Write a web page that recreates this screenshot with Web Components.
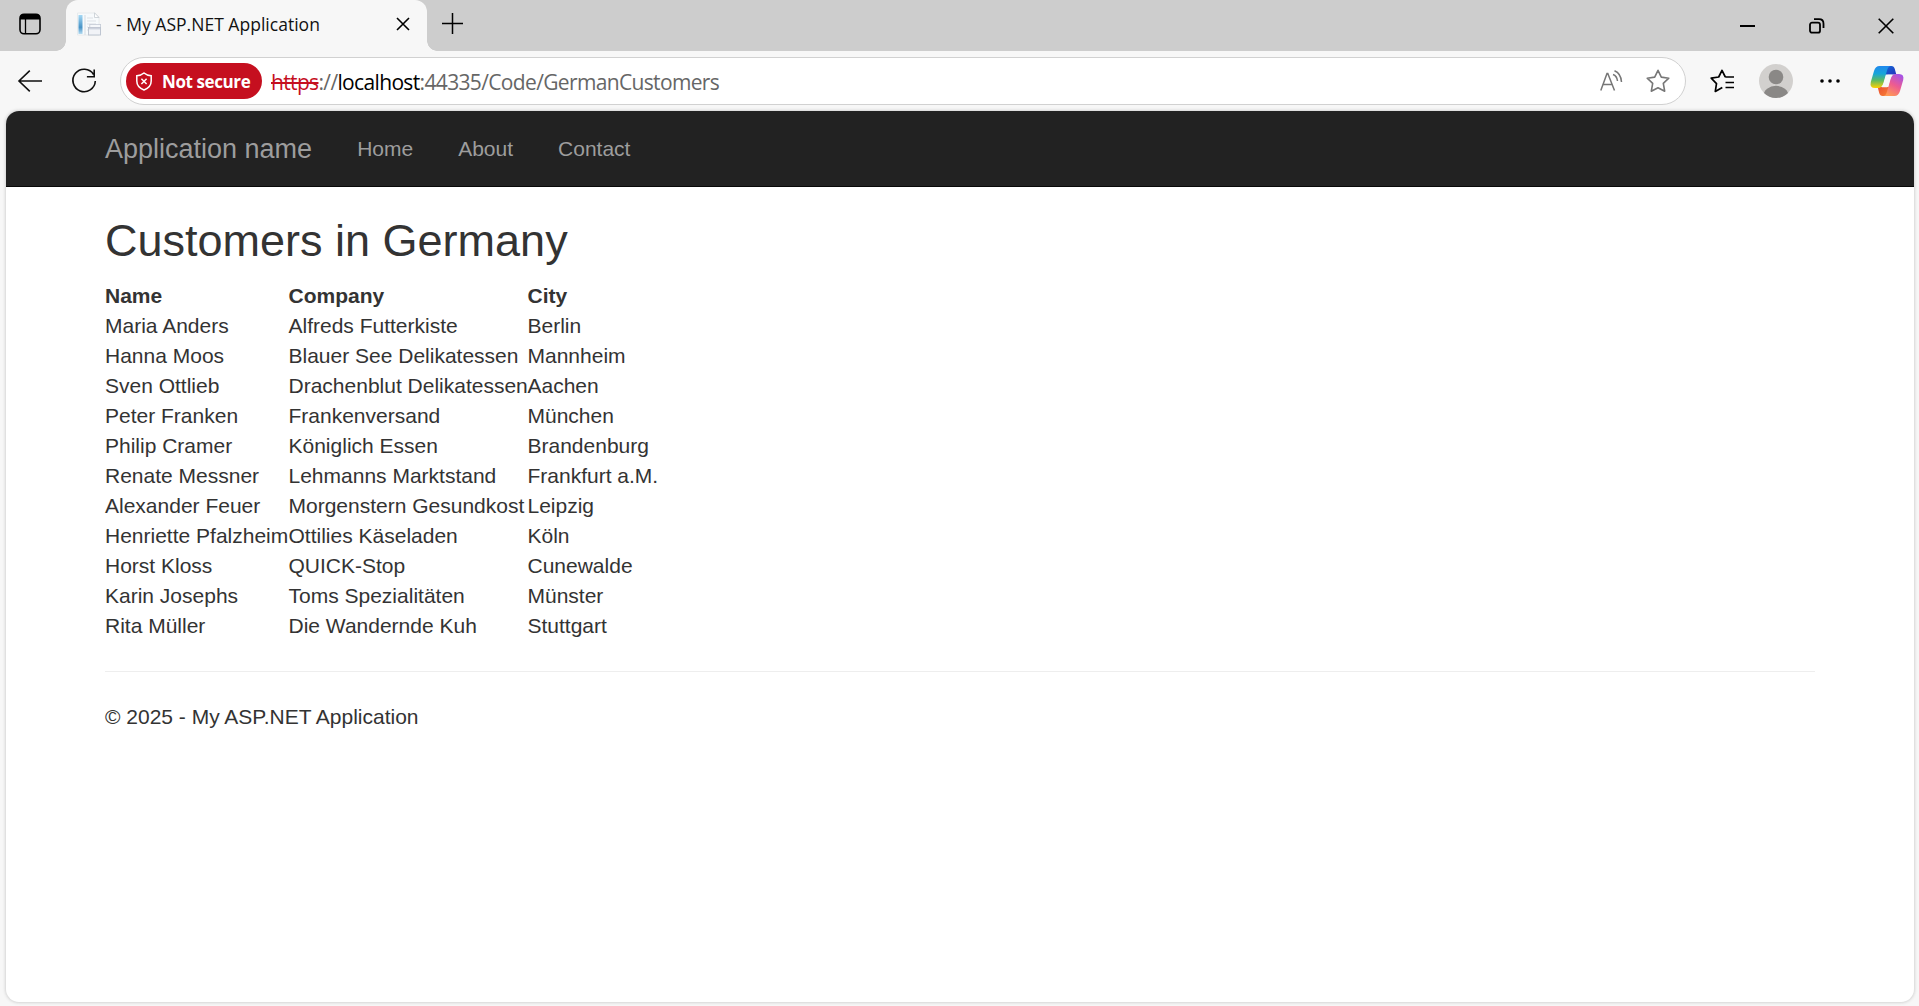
<!DOCTYPE html>
<html lang="en">
<head>
<meta charset="utf-8">
<title>- My ASP.NET Application</title>
<style>
html,body{margin:0;height:100%;background:#f7f7f7;overflow:hidden}
body{font-family:"Liberation Sans",Arial,sans-serif;color:#333}
</style>
</head>
<body>
<browser-window>
  <tab-strip slot="tabs"><browser-tab>- My ASP.NET Application</browser-tab></tab-strip>
  <address-bar slot="toolbar"></address-bar>
  <site-page>
    <site-navbar slot="nav" brand="Application name">
      <nav-link>Home</nav-link><nav-link>About</nav-link><nav-link>Contact</nav-link>
    </site-navbar>
    <h2 slot="title">Customers in Germany</h2>
    <customer-table></customer-table>
    <span slot="footer">© 2025 - My ASP.NET Application</span>
  </site-page>
</browser-window>
<script>
function define(name, html, setup) {
  const template = document.createElement('template');
  template.innerHTML = html;
  customElements.define(name, class extends HTMLElement {
    constructor() {
      super();
      this.attachShadow({ mode: 'open' }).append(template.content.cloneNode(true));
    }
    connectedCallback() { if (setup) setup(this, this.shadowRoot); }
  });
}

const icons = {
  workspace: [22, 22, `<rect x="1" y="1.2" width="20" height="19.6" rx="4" fill="none" stroke="#000" stroke-width="1.6"/><path d="M1 6.500V4.500Q1 1 4.500 1h13Q21 1 21 4.500V6.500z" fill="#000"/><path d="M6.500 6v15" stroke="#000" stroke-width="1.3"/>`],
  favicon: [25, 25, `<defs><linearGradient id="a" x1="0" y1="0" x2="0" y2="1"><stop stop-color="#a5d8f4"/><stop offset=".65" stop-color="#4793c6"/><stop offset="1" stop-color="#b5dcf2"/></linearGradient></defs><path d="M.5 1H18l4 4v18H.5z" fill="#f7fafc" stroke="#e3e7ea" stroke-width=".8"/><path d="M17.500.8v4.700H22z" fill="#fff" stroke="#c5cbd2" stroke-width=".8"/><rect x="1.500" y="3" width="4" height="19" fill="url(#a)"/><path d="M8 3v20" stroke="#d5dbe1"/><path d="M10 6h6M10 9h9M10 12h9M10 15h1M10 18h1" stroke="#dde1e6" stroke-width="1"/><rect x="12.800" y="12.500" width="10.800" height="5" fill="#f5f7fa" stroke="#c4cad5" stroke-width=".8"/><rect x="11.500" y="15.500" width="12" height="7.500" fill="#f1f3f7" stroke="#b9c1cd" stroke-width=".9"/><path d="M12 16.600h11" stroke="#cdd2dd" stroke-width="1.600"/>`],
  close: [14, 14, `<path d="M1 1l12 12M13 1L1 13" stroke="#000" stroke-width="1.600" fill="none"/>`],
  plus: [21, 21, `<path d="M10.500 0v21M0 10.500h21" stroke="#000" stroke-width="1.500" fill="none"/>`],
  minimize: [16, 16, `<path d="M0 8h15" stroke="#000" stroke-width="2"/>`],
  restore: [16, 16, `<rect x="1" y="4.700" width="10" height="10" rx="2" fill="none" stroke="#000" stroke-width="1.800"/><path d="M5 1.200h5q4.500 0 4.500 4.500V10" fill="none" stroke="#000" stroke-width="1.800"/>`],
  exit: [16, 16, `<path d="M.7.7l14.600 14.600M15.300.7L.7 15.300" stroke="#000" stroke-width="1.600"/>`],
  back: [24, 22, `<path d="M11.800.7L1 11l10.800 10.300M1 11h23" fill="none" stroke="#111" stroke-width="1.600"/>`],
  reload: [26, 26, `<path d="M21.600 6.500A11.200 11.200 0 1 0 23.300 13M22.200 1.500v7.300h-7.300" fill="none" stroke="#111" stroke-width="1.600"/>`],
  shield: [16, 19, `<path d="M8 1Q11 3.600 15.200 3.800V9Q15.200 15.200 8 18Q.8 15.200.8 9V3.800Q5 3.600 8 1z" fill="none" stroke="#fff" stroke-width="1.500"/><path d="M5.400 6.800l5.200 5.200M10.600 6.800L5.400 12" stroke="#fff" stroke-width="1.500"/>`],
  read: [24, 22, `<path d="M.8 20.500L7 3.500h.8L14.500 20.500M3 14.500h9.700" fill="none" stroke="#767676" stroke-width="1.500"/><path d="M13 4.500Q17 6 17.500 11M14.500.8Q21 3.500 21.500 12" fill="none" stroke="#767676" stroke-width="1.500"/>`],
  star: [24, 24, `<path d="M12 1.300l3.300 6.800 7.500 1.100-5.500 5.200 1.400 7.800L12 18.700l-6.700 3.500 1.400-7.800L1.200 9.200l7.500-1.100z" fill="none" stroke="#777" stroke-width="1.600" stroke-linejoin="round"/>`],
  favorites: [25, 24, `<path d="M15.300 8L12 1.300 8.700 8 1.200 9.200l5.300 5.400-1.200 7.800L12.300 18.500M15.300 8H24M15.500 13.500H24M15.500 18.500H24" fill="none" stroke="#000" stroke-width="1.700" stroke-linejoin="round"/>`],
  profile: [34, 34, `<defs><clipPath id="c"><circle cx="17" cy="17" r="17"/></clipPath></defs><g clip-path="url(#c)"><path d="M0 0h34v34H0z" fill="#d2d0ce"/><circle cx="17" cy="13" r="7.300" fill="#8a8886"/><ellipse cx="17" cy="31.500" rx="12.500" ry="9.700" fill="#8a8886"/></g>`],
  more: [20, 6, `<g fill="#000"><circle cx="2" cy="3" r="1.800"/><circle cx="10" cy="3" r="1.800"/><circle cx="18" cy="3" r="1.800"/></g>`],
  copilot: [34, 32, `<defs><linearGradient id="l" x1="0" y1="0" x2="0" y2="1"><stop stop-color="#2188ee"/><stop offset=".35" stop-color="#17a5d9"/><stop offset=".65" stop-color="#5cba62"/><stop offset="1" stop-color="#ffd100"/></linearGradient><linearGradient id="r" x1=".8" y1="0" x2=".3" y2="1"><stop stop-color="#a453e8"/><stop offset=".5" stop-color="#ed5b91"/><stop offset="1" stop-color="#ff9a55"/></linearGradient><linearGradient id="t" x1="0" y1="0" x2="1" y2="1"><stop stop-color="#126cd8"/><stop offset="1" stop-color="#2432bb"/></linearGradient><linearGradient id="b" x1="0" y1="0" x2="1" y2="1"><stop stop-color="#e94f31"/><stop offset="1" stop-color="#f98137"/></linearGradient></defs><path d="M15 1h6.500q2.500 0 3.300 3l1.500 5.500H15z" fill="url(#t)"/><path d="M19 31h-6.500q-2.500 0-3.300-3L7.700 22H19z" fill="url(#b)"/><path d="M9.500 1h11q-2.500.5-3.500 4.500l-3.500 12.200Q12 23 8 23H5Q-.5 23 .8 17L4 6Q5.500 1 9.500 1z" fill="url(#l)"/><path d="M24.500 31h-11q2.500-.5 3.500-4.500l3.500-12.200Q22 9 26 9h3q5.500 0 4.200 6L30 26q-1.500 5-5.500 5z" fill="url(#r)"/><path d="M22.300 9.800Q20.800 11 20 14.500L18.200 21q-.3 1.300-1.200 1.300h-5.300Q13 21 14 17.500L15.700 11.500q.5-1.700 2.200-1.700z" fill="#f7f7f7"/>`]
};
define('ui-icon', `<style>:host{display:block;flex:none}svg{display:block;overflow:visible}</style>`, (el, root) => {
  const [w, h, body] = icons[el.getAttribute('name')];
  root.innerHTML += `<svg width="${w}" height="${h}" viewBox="0 0 ${w} ${h}">${body}</svg>`;
});

define('browser-window', `<style>
:host{display:flex;flex-direction:column;height:100vh;background:#f7f7f7}
</style><slot name="tabs"></slot><slot name="toolbar"></slot><slot></slot>`);

define('tab-strip', `<style>
:host{display:flex;align-items:center;height:51px;background:#cdcdcd;box-sizing:border-box;padding:0 9px 0 19px;flex:none}
.ws{margin:-4px 25px 0 0}
.new{margin:-5px 0 0 15px}
.gap{flex:1}
.controls{display:flex;gap:53px;padding-right:16px}
</style><ui-icon class="ws" name="workspace"></ui-icon><slot></slot><ui-icon class="new" name="plus"></ui-icon><span class="gap"></span>
<div class="controls"><ui-icon name="minimize"></ui-icon><ui-icon name="restore"></ui-icon><ui-icon name="exit"></ui-icon></div>`);

define('browser-tab', `<style>
:host{display:flex;align-items:center;position:relative;width:361px;height:51px;box-sizing:border-box;background:#f7f7f7;border-radius:12px 12px 0 0;padding:0 17px 3px 11px;font:17.500px "Open Sans",sans-serif;letter-spacing:.02px;color:#111;white-space:pre}
:host::before,:host::after{content:"";position:absolute;bottom:0;width:10px;height:10px}
:host::before{left:-10px;background:radial-gradient(circle at 0 0,transparent 9.500px,#f7f7f7 10px)}
:host::after{right:-10px;background:radial-gradient(circle at 100% 0,transparent 9.500px,#f7f7f7 10px)}
.title{flex:1;padding:0 0 1px 14px}
</style><ui-icon name="favicon"></ui-icon><span class="title"><slot></slot></span><ui-icon name="close"></ui-icon>`);

define('security-badge', `<style>
:host{display:flex;align-items:center;width:136px;height:36px;box-sizing:border-box;border-radius:18px;background:#c50f1f;color:#fff;padding-left:10px;font:700 17px "Open Sans",sans-serif;letter-spacing:-.4px;white-space:nowrap}
span{margin-left:10px}
</style><ui-icon name="shield"></ui-icon><span><slot></slot></span>`);

define('address-bar', `<style>
:host{display:flex;align-items:center;height:60px;box-sizing:border-box;padding:0 15px 0 18px;flex:none}
.reload{margin:0 22px 0 30px}
.box{display:flex;align-items:center;width:1566px;height:48px;box-sizing:border-box;background:#fff;border:1.500px solid #d1d1d1;border-radius:24px;padding:0 15px 0 5px}
.url{flex:1;margin-left:9px;padding-top:1px;font:21px "Open Sans",sans-serif;letter-spacing:-.65px;color:#666;white-space:nowrap}
s{color:#c50f1f;text-decoration-thickness:2px}b{font-weight:400;color:#000}
.tools{display:flex;align-items:center;gap:22px}
.right{display:flex;align-items:center;flex:1;margin-left:24px}
.profile{margin:0 27px 0 24px}
.more{margin-right:30px}
</style><ui-icon name="back"></ui-icon><ui-icon class="reload" name="reload"></ui-icon>
<div class="box"><security-badge>Not secure</security-badge><span class="url"><s>https</s>://<b>localhost</b>:44335/Code/GermanCustomers</span><div class="tools"><ui-icon name="read"></ui-icon><ui-icon name="star"></ui-icon></div></div>
<div class="right"><ui-icon name="favorites"></ui-icon><ui-icon class="profile" name="profile"></ui-icon><ui-icon class="more" name="more"></ui-icon><ui-icon name="copilot"></ui-icon></div>`);

define('site-page', `<style>
:host{display:flex;flex-direction:column;flex:1;margin:0 5px 4px 6px;background:#fff;border-radius:13px;overflow:hidden;box-shadow:0 0 3px 1px #d4d4d4}
main{padding:29px 99px 0;font-size:21px;line-height:30px}
::slotted(h2){margin:0 0 15px;font-size:45px;line-height:49.500px;font-weight:400}
hr{margin:30px 0;border:0;border-top:1px solid #eee;padding-bottom:.5px}
</style><slot name="nav"></slot><main><slot name="title"></slot><slot></slot><hr><footer><slot name="footer"></slot></footer></main>`);

define('site-navbar', `<style>
:host{display:flex;align-items:center;height:76px;box-sizing:border-box;background:#222;border-bottom:1.500px solid #080808;padding-left:99px;color:#9d9d9d;flex:none;font-size:21px}
.brand{font-size:27px;margin-right:22.500px;padding-top:2px}
</style><span class="brand"></span><slot></slot>`, (el, root) => { root.querySelector('.brand').textContent = el.getAttribute('brand'); });

define('nav-link', `<style>:host{display:block;padding:0 22.500px}</style><slot></slot>`);

const customers = [
  ['Maria Anders', 'Alfreds Futterkiste', 'Berlin'],
  ['Hanna Moos', 'Blauer See Delikatessen', 'Mannheim'],
  ['Sven Ottlieb', 'Drachenblut Delikatessen', 'Aachen'],
  ['Peter Franken', 'Frankenversand', 'München'],
  ['Philip Cramer', 'Königlich Essen', 'Brandenburg'],
  ['Renate Messner', 'Lehmanns Marktstand', 'Frankfurt a.M.'],
  ['Alexander Feuer', 'Morgenstern Gesundkost', 'Leipzig'],
  ['Henriette Pfalzheim', 'Ottilies Käseladen', 'Köln'],
  ['Horst Kloss', 'QUICK-Stop', 'Cunewalde'],
  ['Karin Josephs', 'Toms Spezialitäten', 'Münster'],
  ['Rita Müller', 'Die Wandernde Kuh', 'Stuttgart']
];
define('customer-table', `<style>
:host{display:block}
table{border-collapse:collapse;table-layout:fixed;width:554px}
th,td{padding:0;text-align:left;white-space:nowrap;height:30px}
th:nth-child(1){width:183.500px}th:nth-child(2){width:239px}
</style><table><thead><tr><th>Name</th><th>Company</th><th>City</th></tr></thead><tbody></tbody></table>`, (el, root) => {
  const body = root.querySelector('tbody');
  for (const row of customers) {
    const tr = body.insertRow();
    for (const value of row) tr.insertCell().textContent = value;
  }
});
</script>
</body>
</html>
